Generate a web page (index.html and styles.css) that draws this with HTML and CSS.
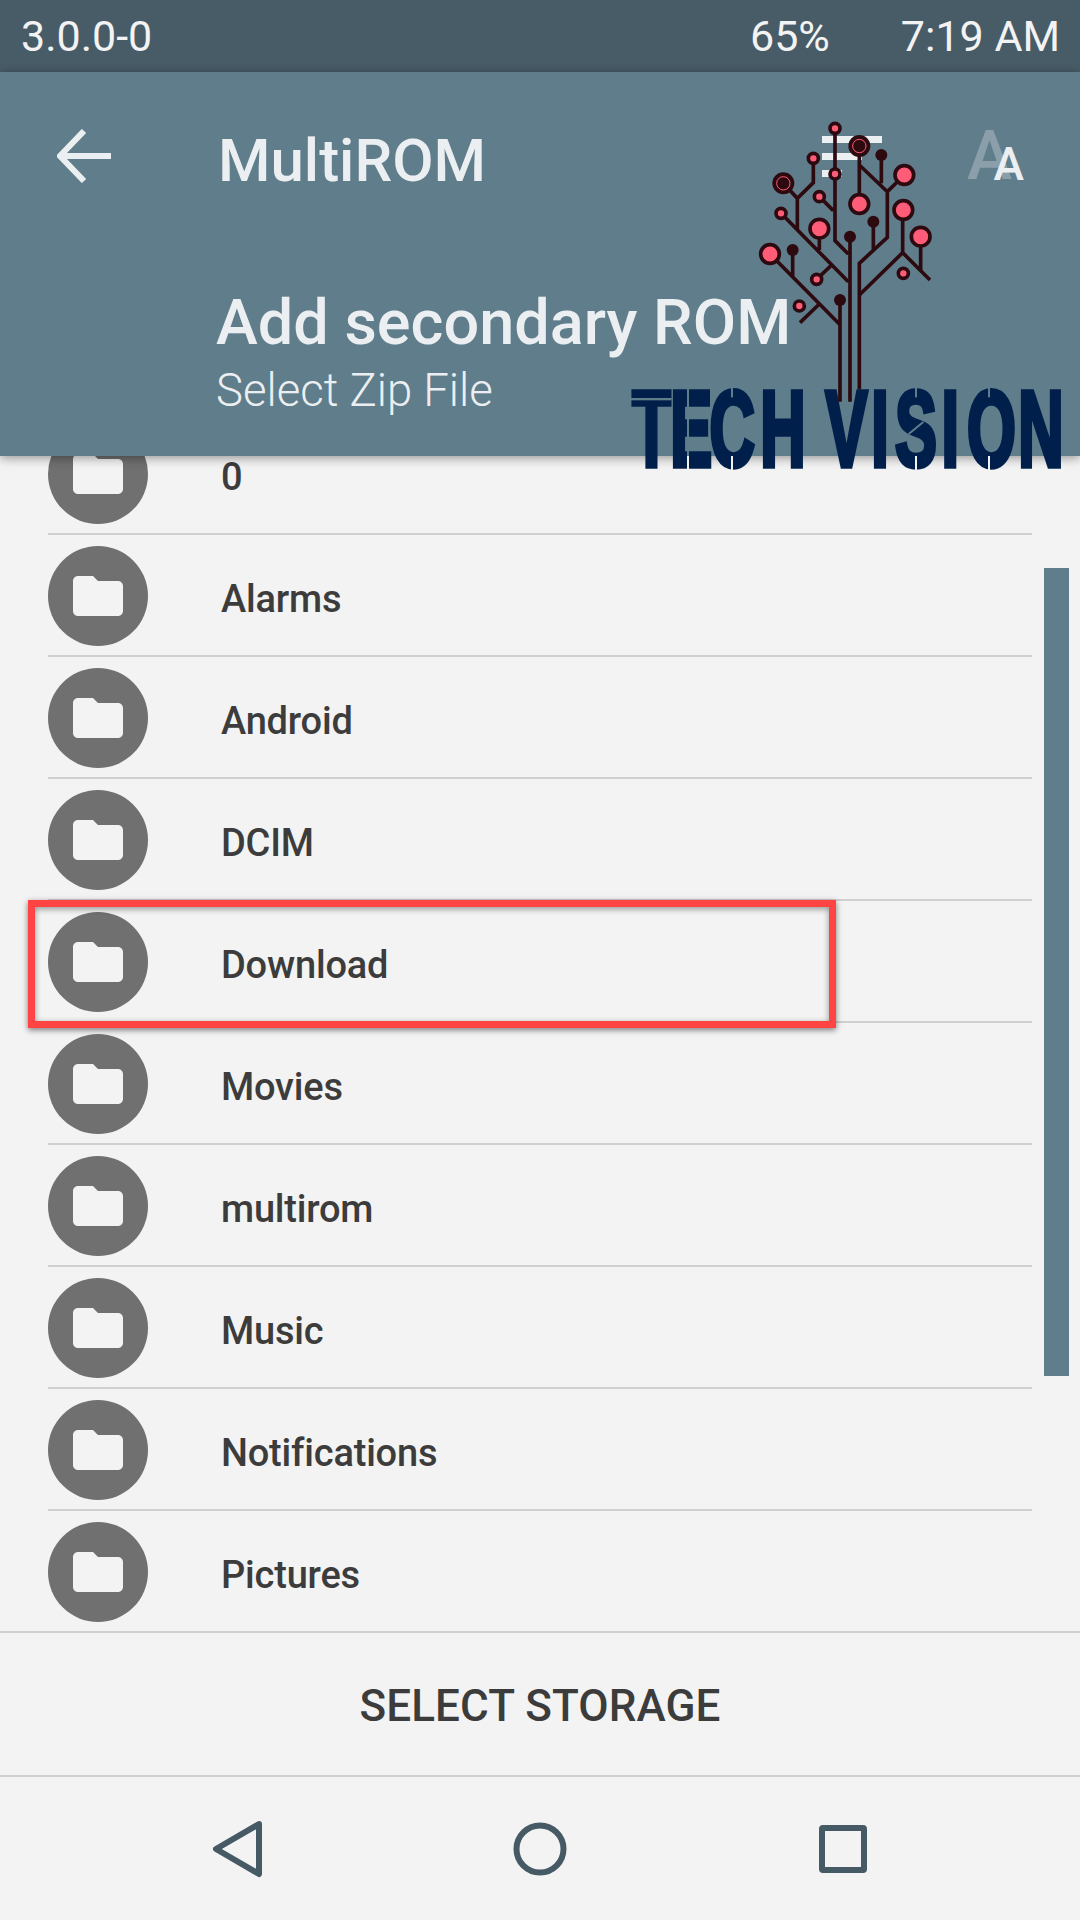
FILE: index.html
```html
<!DOCTYPE html>
<html lang="en">
<head>
    <meta charset="UTF-8">
    <meta name="viewport" content="width=device-width, initial-scale=1.0">
    <title>MultiROM</title>
    <link rel="stylesheet" href="styles.css">
</head>
<body>

<div class="page">
    <!-- Status bar -->
    <div class="status-bar">
        <span class="version">3.0.0-0</span>
        <span class="battery">65%</span>
        <span class="clock">7:19 AM</span>
    </div>

    <!-- Header -->
    <div class="app-bar">
        <div class="top-row">
            <div class="back-slot">
                <svg class="back-icon" viewBox="0 0 54 54"><path d="M54 27H4M27 2 3 27 27 52"/></svg>
            </div>
            <h1 class="title">MultiROM</h1>
            <div class="sort-icon"><i class="w60"></i><i class="w40"></i><i class="w20"></i></div>
            <div class="font-icon"><span class="big-a">A</span><span class="small-a">A</span></div>
        </div>
        <h2 class="heading">Add secondary ROM</h2>
        <p class="subheading">Select Zip File</p>
    </div>

    <!-- File list -->
    <div class="list-wrap">
        <ul class="file-list">
            <li class="row"><span class="badge"><svg viewBox="0 0 24 24"><path d="M10 4H4c-1.100 0-2 .9-2 2v12c0 1.100.9 2 2 2h16c1.100 0 2-.9 2-2V8c0-1.100-.9-2-2-2h-8l-2-2z"/></svg></span><span class="name">0</span></li>
            <li class="row"><span class="badge"><svg viewBox="0 0 24 24"><path d="M10 4H4c-1.100 0-2 .9-2 2v12c0 1.100.9 2 2 2h16c1.100 0 2-.9 2-2V8c0-1.100-.9-2-2-2h-8l-2-2z"/></svg></span><span class="name">Alarms</span></li>
            <li class="row"><span class="badge"><svg viewBox="0 0 24 24"><path d="M10 4H4c-1.100 0-2 .9-2 2v12c0 1.100.9 2 2 2h16c1.100 0 2-.9 2-2V8c0-1.100-.9-2-2-2h-8l-2-2z"/></svg></span><span class="name">Android</span></li>
            <li class="row"><span class="badge"><svg viewBox="0 0 24 24"><path d="M10 4H4c-1.100 0-2 .9-2 2v12c0 1.100.9 2 2 2h16c1.100 0 2-.9 2-2V8c0-1.100-.9-2-2-2h-8l-2-2z"/></svg></span><span class="name">DCIM</span></li>
            <li class="row marked"><span class="badge"><svg viewBox="0 0 24 24"><path d="M10 4H4c-1.100 0-2 .9-2 2v12c0 1.100.9 2 2 2h16c1.100 0 2-.9 2-2V8c0-1.100-.9-2-2-2h-8l-2-2z"/></svg></span><span class="name">Download</span></li>
            <li class="row"><span class="badge"><svg viewBox="0 0 24 24"><path d="M10 4H4c-1.100 0-2 .9-2 2v12c0 1.100.9 2 2 2h16c1.100 0 2-.9 2-2V8c0-1.100-.9-2-2-2h-8l-2-2z"/></svg></span><span class="name">Movies</span></li>
            <li class="row"><span class="badge"><svg viewBox="0 0 24 24"><path d="M10 4H4c-1.100 0-2 .9-2 2v12c0 1.100.9 2 2 2h16c1.100 0 2-.9 2-2V8c0-1.100-.9-2-2-2h-8l-2-2z"/></svg></span><span class="name">multirom</span></li>
            <li class="row"><span class="badge"><svg viewBox="0 0 24 24"><path d="M10 4H4c-1.100 0-2 .9-2 2v12c0 1.100.9 2 2 2h16c1.100 0 2-.9 2-2V8c0-1.100-.9-2-2-2h-8l-2-2z"/></svg></span><span class="name">Music</span></li>
            <li class="row"><span class="badge"><svg viewBox="0 0 24 24"><path d="M10 4H4c-1.100 0-2 .9-2 2v12c0 1.100.9 2 2 2h16c1.100 0 2-.9 2-2V8c0-1.100-.9-2-2-2h-8l-2-2z"/></svg></span><span class="name">Notifications</span></li>
            <li class="row"><span class="badge"><svg viewBox="0 0 24 24"><path d="M10 4H4c-1.100 0-2 .9-2 2v12c0 1.100.9 2 2 2h16c1.100 0 2-.9 2-2V8c0-1.100-.9-2-2-2h-8l-2-2z"/></svg></span><span class="name">Pictures</span></li>
        </ul>
        <div class="scrollbar"></div>
    </div>

    <!-- Bottom button -->
    <div class="storage-btn">SELECT STORAGE</div>

    <!-- Navigation bar -->
    <div class="nav-bar">
        <div class="nav-item"><svg width="56" height="62" viewBox="0 0 56 62"><path d="M50 6 7 31 50 56z" class="nav-stroke"/></svg></div>
        <div class="nav-item"><svg width="54" height="54" viewBox="0 0 54 54"><circle cx="27" cy="27" r="23.500" class="nav-stroke"/></svg></div>
        <div class="nav-item"><svg width="48" height="48" viewBox="0 0 48 48"><rect x="3" y="3" width="42" height="42" rx="1" class="nav-stroke"/></svg></div>
    </div>

    <!-- Watermark -->
    <svg class="logo" viewBox="0 0 1440 1140">
        <text class="logo-text" transform="scale(0.58 1)" y="1097" x="167 364 567 829 1034 1167 1403 1526 1766 1898 2164">TECH VISION</text>
        <g class="cuts-top">
            <rect x="93" y="894" width="122" height="7"/>
            <rect x="261" y="860" width="6" height="208"/>
            <rect x="393" y="860" width="6" height="32"/>
            <rect x="945" y="860" width="6" height="32"/>
            <rect x="1164" y="860" width="6" height="32"/>
            <path d="M926 1002 970 966" class="cut-line"/>
        </g>
        <g class="cuts-low">
            <rect x="261" y="1068" width="6" height="42"/>
            <rect x="393" y="1068" width="6" height="42"/>
            <rect x="945" y="1068" width="6" height="42"/>
            <rect x="1164" y="1068" width="6" height="42"/>
        </g>
        <g class="twigs">
            <path d="M750 410V905M720 600V905M778 868V490L862 412V275L778 195M778 137V312M862 275 913 225M844 165V250M820 365V450"/>
            <path d="M778 585 908 458V330M908 458 990 540M962 410V510"/>
            <path d="M745 545 543 340M745 462 705 422V85M658 290 700 332M592 295V390M550 250 592 295 640 248V175M658 385V450"/>
            <path d="M718 672 510 462M578 450V530M650 538 695 495M600 668 655 615"/>
        </g>
        <g class="dark-dots">
            <circle cx="750" cy="410" r="18"/><circle cx="720" cy="600" r="18"/><circle cx="844" cy="165" r="18"/>
            <circle cx="820" cy="365" r="18"/><circle cx="578" cy="450" r="18"/>
        </g>
        <g class="big-dots">
            <circle cx="913" cy="225" r="28"/><circle cx="778" cy="312" r="28"/><circle cx="910" cy="330" r="28"/>
            <circle cx="962" cy="410" r="28"/><circle cx="658" cy="386" r="28"/><circle cx="510" cy="462" r="28"/>
        </g>
        <g class="small-dots">
            <circle cx="705" cy="85" r="15"/><circle cx="640" cy="175" r="15"/><circle cx="705" cy="222" r="15"/>
            <circle cx="658" cy="290" r="15"/><circle cx="543" cy="340" r="15"/><circle cx="650" cy="538" r="15"/>
            <circle cx="598" cy="618" r="15"/><circle cx="910" cy="520" r="15"/>
        </g>
        <g class="ring-dots">
            <circle cx="778" cy="138" r="33"/><circle cx="550" cy="250" r="33"/>
            <circle class="ring" cx="778" cy="138" r="20"/><circle class="ring" cx="550" cy="250" r="20"/>
        </g>
    </svg>
</div>

</body>
</html>
```

FILE: styles.css
```css
* {
    margin: 0;
    padding: 0;
    box-sizing: border-box;
}

body {
    width: 1080px;
    height: 1920px;
    overflow: hidden;
    background: #f3f3f3;
    font-family: Roboto, sans-serif;
}

.page {
    position: relative;
    display: flex;
    flex-direction: column;
    height: 1920px;
}

/* Status bar */
.status-bar {
    display: flex;
    align-items: center;
    flex: 0 0 72px;
    padding: 0 20px 0 21px;
    background: #485c68;
    color: #f3f3f3;
    font-size: 43px;
    line-height: 72px;
}

.version {
    flex: 1;
}

.clock {
    margin-left: 71px;
}

/* Header */
.app-bar {
    position: relative;
    z-index: 2;
    flex: 0 0 384px;
    background: #607d8b;
    color: #eceff1;
    box-shadow: 0 2px 10px rgba(0, 0, 0, 0.4);
}

.top-row {
    display: flex;
    align-items: center;
    height: 168px;
}

.back-slot {
    display: flex;
    justify-content: flex-end;
    width: 111px;
    margin-right: 107px;
}

.back-icon {
    display: block;
    width: 54px;
    height: 54px;
    fill: none;
    stroke: #eceff1;
    stroke-width: 6;
}

.title {
    flex: 1;
    padding-top: 8px;
    font-size: 60px;
    font-weight: 500;
}

.sort-icon {
    display: flex;
    flex-direction: column;
    gap: 10px;
    width: 60px;
    margin-right: 86px;
}

.sort-icon i {
    display: block;
    height: 7px;
    background: #eceff1;
}

.sort-icon .w60 { width: 60px; }
.sort-icon .w40 { width: 40px; }
.sort-icon .w20 { width: 20px; }

.font-icon {
    position: relative;
    width: 56px;
    height: 48px;
    margin-right: 56px;
    font-weight: 500;
}

.big-a,
.small-a {
    position: absolute;
    bottom: 0;
    line-height: 1;
}

.big-a {
    left: -1px;
    font-size: 68px;
    bottom: -10px;
    color: rgba(236, 239, 241, 0.3);
}

.small-a {
    right: 0;
    font-size: 46px;
    bottom: -7px;
    color: #eceff1;
}

.heading {
    margin: 46px 0 0 216px;
    font-size: 63px;
    font-weight: 500;
    line-height: 74px;
}

.subheading {
    margin: 4px 0 0 216px;
    font-size: 45.500px;
    font-weight: 300;
    line-height: 54px;
}

/* File list */
.list-wrap {
    position: relative;
    flex: 0 0 1175px;
    overflow: hidden;
}

.file-list {
    margin-top: -43px;
    list-style: none;
}

.row {
    position: relative;
    display: flex;
    align-items: center;
    height: 122px;
    margin: 0 48px;
    padding-top: 2px;
    border-bottom: 2px solid #d0d0d0;
}

.badge {
    display: flex;
    align-items: center;
    justify-content: center;
    width: 100px;
    height: 100px;
    margin-right: 73px;
    border-radius: 50%;
    background: #707070;
}

.badge svg {
    display: block;
    width: 60px;
    height: 60px;
    fill: #f3f3f3;
}

.name {
    padding-top: 6px;
    font-size: 38px;
    font-weight: 500;
    letter-spacing: -0.2px;
    color: #3c3c3c;
}

/* Red mark around Download */
.marked::after {
    content: "";
    box-sizing: border-box;
    position: absolute;
    top: -1px;
    left: -20px;
    width: 808px;
    height: 128px;
    border: 7px solid #ff4444;
    box-shadow: 0 2px 6px rgba(0, 0, 0, 0.5), inset 0 2px 6px rgba(0, 0, 0, 0.4);
}

.scrollbar {
    position: absolute;
    top: 112px;
    right: 11px;
    width: 25px;
    height: 808px;
    background: #607d8b;
}

/* Bottom button */
.storage-btn {
    flex: 0 0 146px;
    padding-top: 4px;
    border-top: 2px solid #d0d0d0;
    border-bottom: 2px solid #d0d0d0;
    font-size: 44px;
    font-weight: 500;
    letter-spacing: 0.1px;
    line-height: 138px;
    text-align: center;
    color: #3c3c3c;
}

/* Navigation bar */
.nav-bar {
    display: flex;
    justify-content: center;
    align-items: center;
    flex: 1;
}

.nav-item {
    display: flex;
    justify-content: center;
    align-items: center;
    width: 303px;
}

.nav-stroke {
    fill: none;
    stroke: #455a64;
    stroke-width: 6;
    stroke-linejoin: round;
}

/* Watermark */
.logo {
    position: absolute;
    top: 100px;
    left: 600px;
    z-index: 3;
    width: 480px;
    height: 380px;
}

.twigs {
    fill: none;
    stroke: #2d0a10;
    stroke-width: 11;
}

.dark-dots circle {
    fill: #2d0a10;
}

.big-dots circle,
.small-dots circle {
    fill: #ff5c78;
    stroke: #2d0a10;
    stroke-width: 11;
}

.ring-dots circle {
    fill: #2d0a10;
}

.ring-dots .ring {
    fill: none;
    stroke: #ff5c78;
    stroke-width: 3;
}

.logo-text {
    font-family: "Liberation Sans", sans-serif;
    font-size: 325px;
    font-weight: 700;
    fill: #001f4a;
    stroke: #001f4a;
    stroke-width: 16;
}

.cuts-top rect {
    fill: #607d8b;
}

.cut-line {
    fill: none;
    stroke: #607d8b;
    stroke-width: 6;
}

.cuts-low rect {
    fill: #f3f3f3;
}
```
